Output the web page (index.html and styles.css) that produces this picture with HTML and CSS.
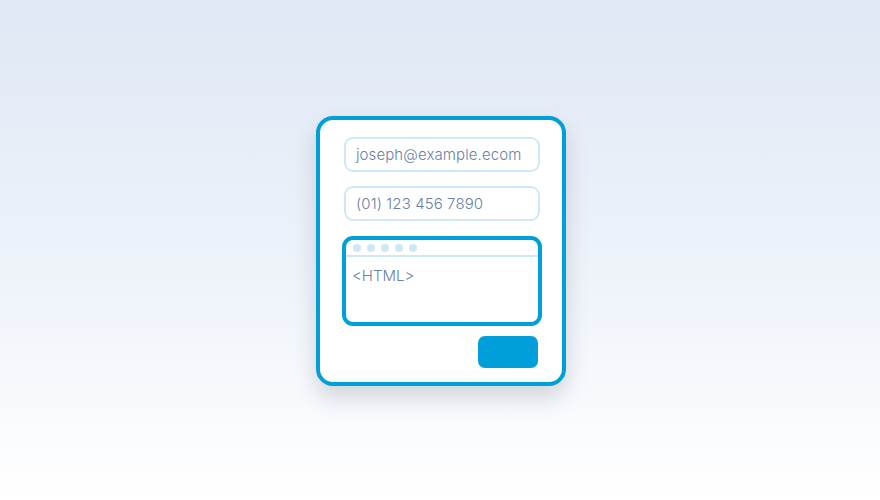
FILE: index.html
```html
<!DOCTYPE html>
<html>
<head>
<meta charset="utf-8">
<link rel="stylesheet" href="styles.css">
</head>
<body>
<div class="stage">
  <div class="card">
    <div class="field">joseph@example.ecom</div>
    <div class="field">(01) 123 456 7890</div>
    <div class="code">
      <div class="code-bar">
        <span class="dot"></span><span class="dot"></span><span class="dot"></span><span class="dot"></span><span class="dot"></span>
      </div>
      <div class="code-body">&lt;HTML&gt;</div>
    </div>
    <div class="actions"><div class="btn"></div></div>
  </div>
</div>
</body>
</html>
```
FILE: styles.css
```css
html, body {
  margin: 0;
  padding: 0;
}
body {
  width: 880px;
  height: 500px;
  background: linear-gradient(180deg, #dfe8f5 0%, #eef3fa 55%, #ffffff 100%);
  font-family: "Inter", "Open Sans", sans-serif;
}
.stage {
  height: 500px;
  display: flex;
  justify-content: center;
  padding-top: 116px;
  padding-left: 2px;
  box-sizing: border-box;
}
.card {
  width: 250px;
  height: 270px;
  box-sizing: border-box;
  border: 4px solid #009fd9;
  border-radius: 17px;
  background: #ffffff;
  padding: 17px 20px 14px 22px;
  display: flex;
  flex-direction: column;
  box-shadow: 0 12px 22px rgba(80, 90, 110, 0.22);
}
.field {
  margin: 0 2px;
  height: 35px;
  box-sizing: border-box;
  border: 2px solid #cfe8f5;
  border-radius: 9px;
  padding: 0 10px;
  display: flex;
  align-items: center;
  color: #6a7fa2;
  font-size: 15px;
  font-weight: 300;
  letter-spacing: 0.1px;
}
.field + .field {
  margin-top: 14px;
}
.code {
  margin-top: 15px;
  height: 90px;
  box-sizing: border-box;
  border: 4px solid #009fd9;
  border-radius: 11px;
  display: flex;
  flex-direction: column;
}
.code-bar {
  height: 15px;
  border-bottom: 2px solid #cfe8f5;
  display: flex;
  align-items: center;
  gap: 6px;
  padding-left: 7px;
}
.dot {
  width: 8px;
  height: 8px;
  border-radius: 50%;
  background: #cfe8f5;
}
.code-body {
  padding: 9px 0 0 6px;
  color: #6a7fa2;
  font-size: 15px;
  font-weight: 300;
}
.actions {
  margin-top: 10px;
  display: flex;
  justify-content: flex-end;
  padding-right: 4px;
}
.btn {
  width: 60px;
  height: 32px;
  border-radius: 7px;
  background: #009fd9;
}
```
